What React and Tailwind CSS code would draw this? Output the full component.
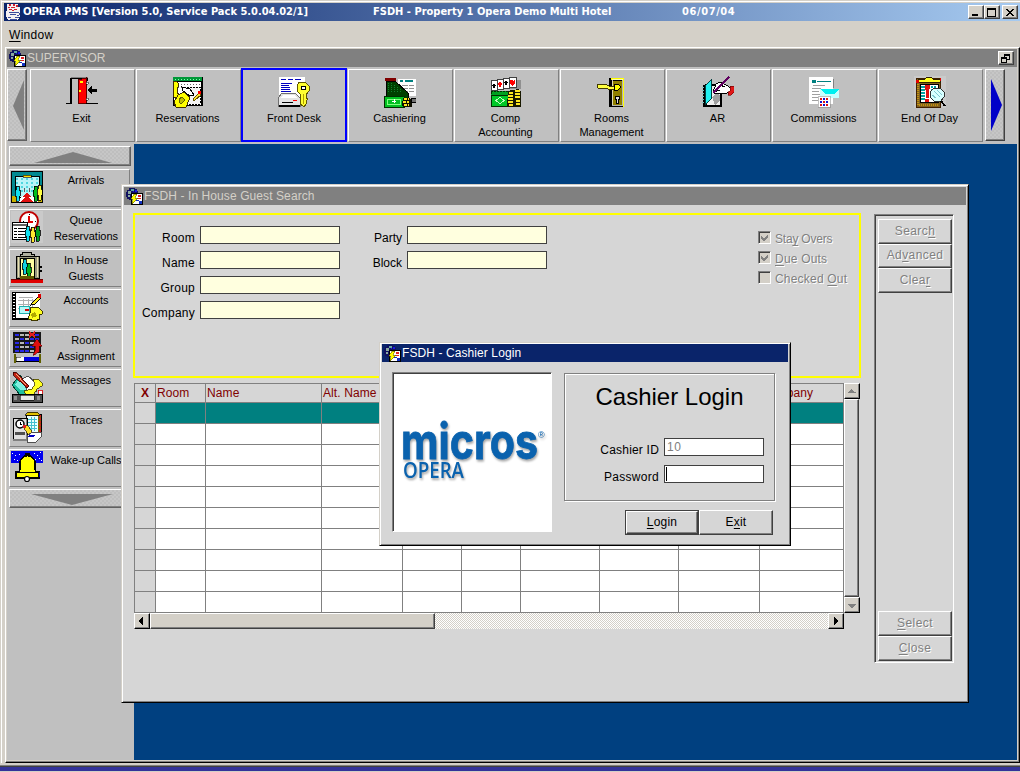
import React from "react";

/* ---------- small pictograms ---------- */

function Pic({ size = 32, children, className = "" }) {
  return (
    <svg width={size} height={size} viewBox={`0 0 ${size} ${size}`} shapeRendering="crispEdges" className={"block shrink-0 " + className}>
      {children}
    </svg>
  );
}

const CupIcon = () => (
  <Pic size={16}>
    <path d="M1 0h11v3h2v9l-2 4H2L0 12V7h1z" fill="#f4f0f0" />
    <path d="M3 0h2v2h-2zM7 0h2v2h-2zM2 3h2v1h-2zM10 1h2v2h-2zM5 3h4v1h-4zM3 5h3v1h-3zM8 5h3v1h-3zM6 6h2v1h-2z" fill="#d02030" />
    <path d="M3 8h8v1h-8zM11 8h2v1h-2zM13 9h1v2h-1zM11 11h2v1h-2zM4 10h6v1h-6zM2 13h3v1h-3zM9 13h4v1h-4zM4 15h7v1h-7z" fill="#3b4a9c" />
  </Pic>
);

const AppIcon = () => (
  <Pic size={17} className="-ml-px">
    <path d="M3 0h6v1h2v2h1v3H5v6H3v-1H1V9H0V4h1V2h2z" fill="#101060" />
    <path d="M2 3h3v3H2zM2 7h2v2H2z" fill="#8aa8a0" />
    <path d="M5 1h3v2H5z" fill="#60a8a0" />
    <path d="M9 2h2v2H9zM7 3h1v1H7z" fill="#1818e0" />
    <rect x="5" y="5" width="12" height="12" fill="#000" />
    <rect x="6" y="6" width="10" height="10" fill="#fff" />
    <path d="M12 7h3v2h-3zM11 10h4v1h-4z" fill="#e02020" />
    <path d="M10 12h3v1h-3zM13 13h3v3h-3z" fill="#1030c0" />
    <path d="M8 6h3l-2 4h3l-6 6 1-5H5z" fill="#ffff00" stroke="#404000" strokeWidth="0.5" />
  </Pic>
);

const ExitIcon = () => (
  <Pic>
    <path d="M4 27V2h18v3h-2V3H6v25H0v-1z" fill="#000" />
    <path d="M5 26V1h17v1H5z" fill="#808080" />
    <path d="M12 4l8-2v25l-8 1z" fill="#f00" stroke="#600000" strokeWidth="1" />
    <path d="M14 5h3v2h-3zM13 14h2v2h-2z" fill="#ffff00" />
    <path d="M20 6h2v2h-2zM20 22h2v2h-2z" fill="#fff" stroke="#000" strokeWidth=".5" />
    <path d="M20 27h12v1H20zM21 14l5-4v3h5v3h-5v3z" fill="#000" />
  </Pic>
);

const ReservationsIcon = () => (
  <Pic>
    <rect x="1" y="1" width="30" height="29" fill="#000" />
    <rect x="1" y="1" width="29" height="4" fill="#009838" />
    <path d="M3 3h25" stroke="#80ffb0" strokeDasharray="1 2" />
    <rect x="2" y="6" width="27" height="23" fill="#fff" />
    <path d="M3 8h26M3 11h26" stroke="#606060" strokeDasharray="1 2" />
    <path d="M12 11h16v17H12z" fill="#f4f4f4" stroke="#000" strokeDasharray="2 1" />
    <path d="M10 11l8 2 4 6-4 1-7-5z" fill="#fff" stroke="#000" />
    <path d="M1 5h3l2 2v4l-1 2v3l2 3v2H2L1 18z" fill="#ffff00" stroke="#403000" />
    <path d="M6 19l6-3 4 4 2 1-1 3-3 7H4l-2-5z" fill="#ffff00" stroke="#403000" />
    <path d="M7 23l3-2 3 3-3 3H8z" fill="#c0c000" stroke="#606000" />
    <path d="M21 23l6-6 2 2-7 6z" fill="#ffe030" stroke="#605000" />
    <path d="M26 15h3v3h-3z" fill="#f00" />
  </Pic>
);

const FrontDeskIcon = () => (
  <Pic>
    <rect x="1" y="1" width="26" height="22" fill="#fff" />
    <path d="M3 3.5h5M10 3.5h5M17 3.5h6M3 7.5h11M3 9.5h8M3 11.5h9M3 13.5h9M3 15.5h10" stroke="#0000c0" strokeWidth="1.2" />
    <path d="M4 17h13l5 5v8H0v-8z" fill="#e4e4e4" stroke="#707070" />
    <path d="M5 19h11l3 3H2z" fill="#fff" />
    <path d="M1 29h21v2H1zM4 26h11v1H4z" fill="#000" />
    <path d="M15 24h4v1h-4z" fill="#f00" />
    <path d="M21 6h6l4 4v5l-3 4v3l2 1-2 2 1 2-3 4-4-3V18l-3-3v-5z" fill="#ffff30" stroke="#605800" />
    <path d="M23 10h4v3h-4z" fill="#fff" stroke="#000" />
    <path d="M25 18v10" stroke="#b0a000" />
  </Pic>
);

const CashieringIcon = () => (
  <Pic>
    <rect x="1" y="2" width="11" height="3" fill="#800000" />
    <rect x="14" y="3" width="18" height="17" fill="#fff" />
    <path d="M16 5h3M21 5h8" stroke="#008080" strokeWidth="2" />
    <path d="M18 9h12M20 12h10M22 15h8" stroke="#909090" />
    <path d="M24 8v10" stroke="#fff" />
    <path d="M2 5h9l13 12v5H2z" fill="#004000" stroke="#000" />
    <path d="M4 7h6M4 9h8M4 11h10M4 13h13M4 15h15" stroke="#108030" strokeDasharray="1 2" />
    <rect x="0" y="20" width="20" height="11" fill="#00c020" stroke="#003000" />
    <rect x="3" y="23" width="13" height="5" fill="none" stroke="#80ff80" />
    <path d="M8 25h4M10 23v4" stroke="#fff" />
    <path d="M19 22h7l2 3v6h-9l-1-3z" fill="#101000" />
    <path d="M20 23h5M19 26h6M20 29h5" stroke="#ffe820" strokeWidth="1.5" strokeDasharray="3 1" />
    <path d="M27 22h5v4h-5z" fill="#707070" stroke="#000" />
  </Pic>
);

const CompIcon = () => (
  <Pic>
    <path d="M3 4h28v9H3z" fill="#909090" />
    <path d="M1 4h6v10H1zM7 3h6v10H7zM13 2h6v10h-6zM19 1h7v10h-7z" fill="#fff" stroke="#404040" />
    <path d="M4 7l2 3H2zM16 4l2 3h-4z" fill="#000" />
    <path d="M3 10h2v2H3zM15 7h2v2h-2z" fill="#000" />
    <path d="M10 5l2 3-2 4-2-4zM20 4h2l1 1 1-1h1v3l-3 3-2-3z" fill="#f00" />
    <path d="M1 15h23v4H1z" fill="#00a020" stroke="#003000" strokeDasharray="2 1" />
    <rect x="1" y="19" width="20" height="11" fill="#00c828" stroke="#003000" />
    <path d="M10 21l4 3.500-4 3.500-4-3.500z" fill="none" stroke="#c0ffc0" />
    <path d="M18 15l4-1 1 0 6-1 2 3v15H17z" fill="#181800" />
    <path d="M19 17h4M18 20h5M18 23h5M18 26h5M19 29h4M25 15h5M25 18h5M25 21h5M26 25h4M26 28h4" stroke="#ffe820" strokeWidth="1.6" />
  </Pic>
);

const RoomsIcon = () => (
  <Pic>
    <rect x="13" y="2" width="15" height="29" fill="#ffff00" />
    <path d="M13 2h2v29h-2zM13 30h14v1H13z" fill="#000" />
    <rect x="15" y="4" width="11" height="25" fill="#908000" stroke="#000" />
    <rect x="16.500" y="3.500" width="10" height="26" fill="none" stroke="#fff" strokeWidth=".7" />
    <path d="M1 8h8l4 2h5v3h-6l-4-1H2z" fill="#ffff40" stroke="#403800" />
    <path d="M18 8h4l2 2v2l-2 2h-4z" fill="#ffff00" stroke="#000" />
    <path d="M19 20h4v3h-1v4h-2v-4h-1z" fill="#e0e0e0" stroke="#000" />
  </Pic>
);

const ArIcon = () => (
  <Pic>
    <path d="M1 9l3-1h12l4 4v19H1z" fill="#000" />
    <path d="M5 10h11l2 3v16H5z" fill="#f0f0f0" />
    <path d="M10 21l5-4 3 3v5l-5 4z" fill="#a0a0a0" />
    <path d="M3 10l6-6v19l-6 6z" fill="#20f0f0" stroke="#004040" />
    <path d="M1 11v18" stroke="#80c0c0" strokeWidth="2" strokeDasharray="1 2" />
    <path d="M11 16l3-8 4-2 6 3 5 3v4l-4 1h-7l-5 1z" fill="#fff" stroke="#000" />
    <path d="M12 16l6-2M18 9l5 2" stroke="#000" />
    <path d="M28 10h4v6l-3 3h-3v-3l2-1z" fill="#e01818" stroke="#600" strokeWidth=".6" />
    <path d="M11 17L27 1" stroke="#600060" strokeWidth="2" />
  </Pic>
);

const CommissionsIcon = () => (
  <Pic>
    <path d="M1 1h24v27H1z" fill="#fff" />
    <path d="M4 4h4v3H4z" fill="#008080" />
    <path d="M9 5.500h14" stroke="#008080" />
    <path d="M5 9.500h12M4 12.500h9M4 15.500h7M4 18.500h8M4 21.500h6M4 24.500h6" stroke="#a0a0a0" />
    <path d="M25 3v9" stroke="#808080" />
    <path d="M12 13h19v9H12z" fill="#c8ffff" />
    <path d="M12 13h19l-5 5h-9z" fill="#00f0f0" />
    <rect x="10" y="20" width="12" height="11" fill="#fff" stroke="#808080" strokeWidth=".5" />
    <path d="M12 22h2v2h-2zM18 22h2v2h-2zM15 25h2v2h-2zM12 28h2v2h-2zM18 28h2v2h-2z" fill="#e01010" />
    <path d="M15 22h2v2h-2zM12 25h2v2h-2zM18 25h2v2h-2zM15 28h2v2h-2z" fill="#1010d0" />
  </Pic>
);

const EndOfDayIcon = () => (
  <Pic>
    <rect width="32" height="32" fill="#cacaca" />
    <path d="M2 2h24v29H2z" fill="#806020" stroke="#402000" />
    <path d="M4 6v23h20" fill="none" stroke="#c09010" strokeDasharray="1 1" strokeWidth="2" />
    <rect x="6" y="8" width="18" height="18" fill="#fff" stroke="#000" />
    <path d="M8 10v14M10 10v14M18 10v12M21 10v4" stroke="#00a0a0" strokeDasharray="2 1" strokeWidth="1.500" />
    <path d="M4 3l6 1 3-3h4l3 3 6-1v3H4z" fill="#ffff20" stroke="#302000" />
    <path d="M2 4h3v3H2zM26 2h1v3h-1z" fill="#e00000" />
    <path d="M11 9h5l-1 9v4h-3v-4zM11 23h4v3h-4z" fill="#e01010" />
    <path d="M20 12h6l4 4v5l-3 4h-7l-4-4v-5z" fill="#d8ffff" stroke="#303030" />
    <path d="M20 15l6 6M18 19l4 3M23 14l5 5" stroke="#80c8d0" />
    <path d="M27 25l4 5" stroke="#000" strokeWidth="2" />
  </Pic>
);

/* ---------- side icons ---------- */

const Person = ({ x, y, fill }) => (
  <path d={`M${x + 1} ${y}h3v4h1v6h-1v5h-3v-5h-1v-6h1z`} fill={fill} stroke="#000" strokeWidth=".8" />
);

const ArrivalsIcon = () => (
  <Pic>
    <rect width="32" height="32" fill="#000" />
    <rect x="1" y="1" width="30" height="30" fill="#008890" />
    <rect x="4" y="5" width="24" height="21" fill="#b8f4f8" stroke="#000" />
    <path d="M5 8h22M5 12h22M5 16h22M5 20h22" stroke="#50d8e0" strokeWidth="2" strokeDasharray="2 3" />
    <path d="M5 31l6-6h10l7 6z" fill="#fff" />
    <rect x="12" y="4" width="8" height="2" fill="#ffe000" stroke="#000" strokeWidth=".6" />
    <path d="M13 17h1v4h-1zM18 17h1v4h-1z" fill="#606060" />
    <path d="M16 21l4 5h-2l4 5H10l4-5h-2z" fill="#e01010" />
    <path d="M1 25h5v6H1zM27 25h4v6h-4z" fill="#c8b000" />
    <Person x={4} y={15} fill="#10e0f0" />
    <Person x={22} y={15} fill="#00c020" />
    <Person x={26} y={14} fill="#ffff40" />
  </Pic>
);

const QueueIcon = () => (
  <Pic>
    <rect width="32" height="32" fill="#cacaca" />
    <circle cx="18" cy="10" r="9" fill="#fff" stroke="#c00000" strokeWidth="2" shapeRendering="auto" />
    <path d="M18 5v6h4" fill="none" stroke="#e00000" strokeWidth="1.500" />
    <path d="M12 10h1M24 10h1M18 3v1" stroke="#000" />
    <rect x="1.500" y="11.500" width="15" height="17" fill="#fff" stroke="#000" />
    <path d="M2 14h14" stroke="#606060" strokeWidth="2" />
    <path d="M3 17.500h3M3 20.500h3M3 23.500h3M3 26.500h3M7 17.500h8M7 20.500h8M7 23.500h8M7 26.500h8" stroke="#000" strokeWidth="1.300" />
    <Person x={14} y={15} fill="#10e0f0" />
    <Person x={24} y={15} fill="#00a020" />
    <Person x={19} y={16} fill="#ffe830" />
  </Pic>
);

const InHouseIcon = () => (
  <Pic>
    <path d="M9 3h2V1h9v2h3v3H9z" fill="#b0b0a0" stroke="#000" />
    <rect x="5" y="5" width="23" height="22" fill="#989880" stroke="#000" />
    <path d="M7 6v20M26 6v20" stroke="#e8e0b0" />
    <rect x="9" y="7" width="14" height="19" fill="#ffffa0" stroke="#000" />
    <Person x={11} y={8} fill="#10d0e0" />
    <Person x={15} y={12} fill="#00b020" />
    <path d="M9 25h14v3H9z" fill="#605800" />
    <rect y="28" width="32" height="4" fill="#e00000" />
    <path d="M0 28h32" stroke="#700000" />
    <path d="M29 15h2v2h-2zM29 19h2v2h-2z" fill="#000" />
  </Pic>
);

const AccountsIcon = () => (
  <Pic>
    <rect x="1" y="1" width="28" height="28" fill="#000" />
    <rect x="5" y="2" width="24" height="25" fill="#fff" />
    <path d="M3 2v27" stroke="#fff" strokeWidth="2" strokeDasharray="1 2" />
    <path d="M8 6h14M7 9h17M7 13h17M7 17h10M12 8v12M17 8v10M21 8v8" stroke="#b0b0b0" />
    <rect x="8" y="15" width="10" height="7" fill="#b8f8f8" stroke="#20b0b0" />
    <path d="M14 18h4v2h-4z" fill="#e00000" />
    <path d="M21 12l7-7 2 2-6 6-4 1z" fill="#ffe820" stroke="#000" />
    <path d="M27 3h3v4h-3z" fill="#e00000" />
    <path d="M19 17l8-1 4 4v3l-3 1 1 4-5 2-7-2 2-6z" fill="#ffff20" stroke="#403800" />
    <path d="M20 23l4-2 2 4-5 2z" fill="#b0a800" />
  </Pic>
);

const RoomAssignIcon = () => (
  <Pic>
    <rect x="2" y="1" width="28" height="21" fill="#181818" />
    <path d="M4 4h24M4 8h24M4 12h24M4 16h24M4 20h24" stroke="#2828e8" strokeWidth="2" strokeDasharray="4 1" />
    <path d="M9 4h4M14 4h4M14 8h4M9 12h4M4 8h4M14 16h4M9 16h4M19 20h4M19 12h4" stroke="#b8b8b8" strokeWidth="2" />
    <path d="M18 1l6 5M24 1l-6 5" stroke="#e02020" strokeWidth="2" />
    <path d="M26 8l5 7h-3v6l-5 3h-1l2-4v-5h-3z" fill="#e01010" stroke="#500000" strokeWidth=".6" />
    <path d="M3 23h2v9H3zM28 23h2v9h-2z" fill="#606000" />
    <path d="M5 26h5v4H5z" fill="#fff" stroke="#000" strokeWidth=".5" />
    <path d="M10 26h18v4H10z" fill="#0000e0" />
    <path d="M10 26h3v4h-3z" fill="#fff" />
    <path d="M5 30h23v1H5z" fill="#000" />
  </Pic>
);

const MessagesIcon = () => (
  <Pic>
    <path d="M1 14l8-10 10 14-6 6H9z" fill="#20c0a0" stroke="#004030" />
    <path d="M4 14l5-7 7 12H9z" fill="#80f0e0" />
    <path d="M11 8l6-3 7 6 2 9-8 3z" fill="#fff" stroke="#505050" />
    <path d="M2 1l3 0 13 14-2 2L2 4z" fill="#c02010" stroke="#300000" strokeWidth=".8" />
    <path d="M5 3l10 11" stroke="#ffd0a0" strokeWidth=".8" />
    <path d="M22 8h5l4 4v3l-5 3-4 6h-7l-2-4 8-2 3-5z" fill="#ffff20" stroke="#403800" strokeWidth=".8" />
    <path d="M27 19h4v4h-4z" fill="#fff" stroke="#e00000" strokeWidth=".8" />
    <path d="M1 23h30v8H1z" fill="#505050" stroke="#000" />
    <path d="M9 24h14v5H9z" fill="#e8e8e8" stroke="#000" strokeWidth=".6" />
    <path d="M3 25h3v4H3zM26 25h3v4h-3z" fill="#909090" />
  </Pic>
);

const TracesIcon = () => (
  <Pic>
    <path d="M15 3h15v20H15z" fill="#806800" stroke="#000" />
    <path d="M29 4v18" stroke="#d02020" strokeWidth="1.500" strokeDasharray="2 1" />
    <rect x="16" y="5" width="11" height="17" fill="#e8ffff" />
    <path d="M17 8h9M17 11h9M17 14h9M17 17h9M20 6v14M23 6v14" stroke="#40c0d0" />
    <path d="M14 4l3-3h9l3 3z" fill="#e0c000" stroke="#000" strokeWidth=".7" />
    <rect x="2" y="7" width="14" height="21" fill="#e0e0e0" stroke="#000" />
    <path d="M2 28h14v1H2zM15 8v20" stroke="#808080" />
    <circle cx="9" cy="13" r="4" fill="#fff" stroke="#000" strokeWidth="1.500" shapeRendering="auto" />
    <path d="M9 11v2h2" fill="none" stroke="#000" />
    <path d="M4 21h10v3H4z" fill="#505050" />
    <path d="M14 14l3 1 5 7-2 2-3-1-4-6z" fill="#ffe020" stroke="#403000" strokeWidth=".8" />
    <path d="M12 14h3v3h-3z" fill="#e02020" />
    <path d="M16 25l5-4h9v5l-5 5h-9z" fill="#fff" stroke="#505050" />
    <path d="M18 24h6l-2 2h-5z" fill="#0000c0" />
  </Pic>
);

const WakeUpIcon = () => (
  <Pic>
    <rect width="32" height="12" fill="#0000f0" />
    <path d="M1 2h1M4 4h1M3 8h1M8 3h1M11 6h1M23 2h1M26 4h1M29 1h1M28 7h1M30 9h1M24 8h1M6 9h1" stroke="#fff" strokeWidth="1" />
    <path d="M15 3h3v2h2l4 5v9l1 2h3v6H5v-6h3l1-2v-9l4-5h2z" fill="#ffff00" stroke="#000" strokeWidth="1.300" />
    <path d="M15 2h3v3h-3zM8 21h17v1H8z" fill="#000" />
    <circle cx="16" cy="28" r="2.500" fill="#fff" stroke="#000" strokeWidth="1.200" shapeRendering="auto" />
    <path d="M28 21h1v5h-1z" fill="#0000a0" />
  </Pic>
);

/* ---------- controls ---------- */

function WinBtn({ children, className = "" }) {
  return (
    <div className={"flex h-[14px] w-[16px] items-center justify-center border border-t-white border-l-white border-r-[#404040] border-b-[#404040] bg-[#d4d0c8] shadow-[inset_-1px_-1px_0_#808080] " + className}>
      {children}
    </div>
  );
}

function ScrollBtn({ d, color = "#000" }) {
  return (
    <div className="flex h-[16px] w-[16px] shrink-0 items-center justify-center border border-t-white border-l-white border-r-black border-b-black bg-[#d4d0c8] shadow-[inset_-1px_-1px_0_#808080]">
      <svg width="8" height="8" viewBox="0 0 8 8" shapeRendering="crispEdges">
        <path d={d} fill={color} />
      </svg>
    </div>
  );
}

function ToolButton({ icon: Icon, lines, active }) {
  const frame = active
    ? "border-2 border-[#0000ff] h-[74px] w-[106px] -mt-px -ml-px mr-px pt-[6px]"
    : "border border-t-white border-l-white border-r-[#808080] border-b-[#808080] h-[73px] w-[105px] mr-px pt-[6px] pr-[2px]";
  return (
    <div className={`flex shrink-0 flex-col items-center bg-[#c0c0c0] ${frame}`}>
      <Icon />
      <div className="mt-[3px] text-center text-[11px] leading-[14px] text-black">
        {lines.map((l) => (
          <div key={l}>{l}</div>
        ))}
      </div>
    </div>
  );
}

function SideItem({ icon: Icon, lines }) {
  return (
    <div className="mb-[2px] flex h-[38px] w-[121px] border border-t-white border-l-white border-r-[#808080] border-b-[#808080] pt-[1px] pl-px">
      <Icon />
      <div className="flex-1 pt-px text-center text-[11px] leading-4 text-black">
        {lines.map((l) => (
          <div key={l} className="whitespace-nowrap">{l}</div>
        ))}
      </div>
    </div>
  );
}

function SearchField({ label, lw }) {
  return (
    <div className="flex h-[25px] items-start">
      <div className={`${lw} pt-[4px] pr-[5px] text-right text-[12px] leading-4 text-black`}>{label}</div>
      <div className="h-[18px] w-[140px] border border-[#404040] bg-[#ffffdf]" />
    </div>
  );
}

const disabledText = "text-[#808080] [text-shadow:1px_1px_0_#fff]";

function Check({ checked, tracking = "tracking-[0.2px]", children }) {
  return (
    <div className="flex h-5 items-start">
      <div className="flex h-[13px] w-[13px] items-center justify-center border border-t-[#808080] border-l-[#808080] border-r-white border-b-white bg-[#d4d0c8] shadow-[inset_1px_1px_0_#404040]">
        {checked && (
          <svg width="9" height="9" viewBox="0 0 9 9" shapeRendering="crispEdges">
            <path d="M1 3v3l2 2h1l4-4V1L4 5H3z" fill="#808080" />
          </svg>
        )}
      </div>
      <div className={`ml-[4px] whitespace-nowrap text-[12px] leading-4 ${tracking} ${disabledText}`}>{children}</div>
    </div>
  );
}

function PanelButton({ h, children }) {
  return (
    <div className={`${h} flex w-[74px] items-center justify-center border border-t-white border-l-white border-r-[#404040] border-b-[#404040] pb-[2px] text-[12px] tracking-[0.4px] shadow-[inset_-1px_-1px_0_#808080] ${disabledText}`}>
      <span>{children}</span>
    </div>
  );
}

const U = ({ children }) => <span className="underline underline-offset-2">{children}</span>;

function MdiTitle({ children, tone }) {
  return (
    <div className={`flex h-[18px] items-center pl-[3px] text-[12px] tracking-[0.09px] ${tone}`}>
      <AppIcon />
      <span className="ml-px whitespace-nowrap">{children}</span>
    </div>
  );
}

/* ---------- data ---------- */

const tools = [
  { icon: ExitIcon, lines: ["Exit"] },
  { icon: ReservationsIcon, lines: ["Reservations"] },
  { icon: FrontDeskIcon, lines: ["Front Desk"], active: true },
  { icon: CashieringIcon, lines: ["Cashiering"] },
  { icon: CompIcon, lines: ["Comp", "Accounting"] },
  { icon: RoomsIcon, lines: ["Rooms", "Management"] },
  { icon: ArIcon, lines: ["AR"] },
  { icon: CommissionsIcon, lines: ["Commissions"] },
  { icon: EndOfDayIcon, lines: ["End Of Day"] },
];

const sideItems = [
  { icon: ArrivalsIcon, lines: ["Arrivals"] },
  { icon: QueueIcon, lines: ["Queue", "Reservations"] },
  { icon: InHouseIcon, lines: ["In House", "Guests"] },
  { icon: AccountsIcon, lines: ["Accounts"] },
  { icon: RoomAssignIcon, lines: ["Room", "Assignment"] },
  { icon: MessagesIcon, lines: ["Messages"] },
  { icon: TracesIcon, lines: ["Traces"] },
  { icon: WakeUpIcon, lines: ["Wake-up Calls"] },
];

const columns = ["X", "Room", "Name", "Alt. Name", "", "", "", "", "", "Company"];
const gridCols = "grid grid-cols-[21px_50px_116px_81px_59px_59px_79px_79px_81px_84px]";

/* ---------- windows ---------- */

function GuestTable() {
  return (
    <div className="w-[710px] border-t border-l border-[#808080]">
      <div className={gridCols}>
        {columns.map((c, i) => (
          <div key={i} className={`h-[19px] border-r border-b border-[#808080] text-[12px] leading-[18px] whitespace-nowrap text-[#800000] ${i === 0 ? "text-center font-bold" : "pl-px tracking-[0.1px]"}`}>
            {c}
          </div>
        ))}
      </div>
      {Array.from({ length: 10 }, (_, r) => (
        <div key={r} className={gridCols}>
          {columns.map((_, i) => (
            <div key={i} className={`h-[21px] border-r border-b border-[#808080] ${i === 0 ? "bg-[#d6d6d6]" : r === 0 ? "bg-[#008080]" : "bg-white"}`} />
          ))}
        </div>
      ))}
    </div>
  );
}

function GuestSearchWindow() {
  return (
    <div className="absolute top-[40px] left-[-13px] h-[519px] w-[848px] border border-t-[#d4d0c8] border-l-[#d4d0c8] border-r-black border-b-black bg-[#d6d6d6] shadow-[inset_1px_1px_0_#fff,inset_-1px_-1px_0_#808080]">
      <div className="flex h-full flex-col pt-[2px] pr-[2px] pl-[2px]">
        <MdiTitle tone="bg-[#808080] text-[#d4d0c8]">FSDH - In House Guest Search</MdiTitle>
        <div className="flex flex-1 pt-[8px] pl-[9px]">
          <div className="w-[728px]">
            <div className="flex h-[165px] w-[728px] border-2 border-[#ffff00] pt-[11px]">
              <div className="tracking-[0.25px]">
                {["Room", "Name", "Group", "Company"].map((l) => (
                  <SearchField key={l} label={l} lw="w-[65px]" />
                ))}
              </div>
              <div>
                {["Party", "Block"].map((l) => (
                  <SearchField key={l} label={l} lw="w-[67px]" />
                ))}
              </div>
              <div className="ml-[211px] pt-[5px]">
                <Check checked tracking="tracking-[-0.2px]">Sta<U>y</U> Overs</Check>
                <Check checked><U>D</U>ue Outs</Check>
                <Check>Checked <U>O</U>ut</Check>
              </div>
            </div>
            <div className="mt-[5px] ml-px flex">
              <GuestTable />
              <div className="flex w-[16px] flex-col">
                <ScrollBtn d="M4 2v1h1v1h1v1h2v1H0V5h1V4h1V3h1V2z" color="#808080" />
                <div className="w-[15px] flex-1 border border-t-white border-l-white border-r-[#404040] border-b-[#404040] shadow-[inset_-1px_-1px_0_#808080]" />
                <ScrollBtn d="M0 3h8v1H7v1H6v1H5v1H3V6H2V5H1V4H0z" color="#808080" />
              </div>
            </div>
            <div className="ml-px flex h-[16px] w-[710px]">
              <ScrollBtn d="M5 0v8H4V7H3V6H2V5H1V3h1V2h1V1h1V0z" />
              <div className="w-[285px] border border-t-white border-l-white border-r-[#404040] border-b-[#404040] bg-[#d4d0c8] shadow-[inset_-1px_-1px_0_#808080]" />
              <div className="flex-1 bg-[repeating-conic-gradient(#fff_0_25%,#d4d0c8_0_50%)] bg-[length:2px_2px]" />
              <ScrollBtn d="M2 0h1v1h1v1h1v1h1v2H5v1H4v1H3v1H2z" />
            </div>
          </div>
          <div className="mt-px ml-[13px] flex h-[449px] w-[80px] flex-col justify-between border border-t-[#808080] border-l-[#808080] border-r-white border-b-white pt-[4px] pb-px pl-[3px] shadow-[inset_1px_1px_0_#404040]">
            <div>
              <PanelButton h="h-[25px]">Searc<U>h</U></PanelButton>
              <PanelButton h="h-[24px]">Ad<U>v</U>anced</PanelButton>
              <PanelButton h="h-[25px]">Clea<U>r</U></PanelButton>
            </div>
            <div>
              <PanelButton h="h-[25px]"><U>S</U>elect</PanelButton>
              <PanelButton h="h-[25px]"><U>C</U>lose</PanelButton>
            </div>
          </div>
        </div>
      </div>
    </div>
  );
}

function LogoBox() {
  return (
    <div className="h-[160px] w-[160px] border border-t-[#808080] border-l-[#808080] border-r-white border-b-white bg-white shadow-[inset_1px_1px_0_#404040]">
      <svg width="158" height="158" viewBox="0 0 158 158" className="overflow-visible [filter:drop-shadow(1px_2px_1px_rgba(0,0,0,0.35))]">
        <text x="8" y="86" fontFamily="Inter, 'Liberation Sans', Arial, sans-serif" fontWeight="700" fontSize="49" fill="#0a62ae" stroke="#0a62ae" strokeWidth="0.8" textLength="137" lengthAdjust="spacingAndGlyphs">micros</text>
        <text x="145" y="65" fontFamily="'Liberation Sans', Arial, sans-serif" fontSize="9" fill="#0a62ae">®</text>
        <text x="10" y="105" fontFamily="'Open Sans', 'Noto Sans', sans-serif" fontWeight="600" fontSize="21" fill="#0a62ae" textLength="61" lengthAdjust="spacingAndGlyphs">OPERA</text>
      </svg>
    </div>
  );
}

function LoginDialog() {
  return (
    <div className="absolute top-[198px] left-[245px] h-[204px] w-[412px] border border-t-[#d4d0c8] border-l-[#d4d0c8] border-r-black border-b-black bg-[#d6d6d6] shadow-[inset_1px_1px_0_#fff,inset_-1px_-1px_0_#808080]">
      <div className="px-[2px] pt-px">
        <MdiTitle tone="bg-[#0a246a] text-white">FSDH - Cashier Login</MdiTitle>
        <div className="flex pt-[10px] pl-[10px]">
          <LogoBox />
          <div className="ml-[12px] w-[211px]">
            <div className="mt-px h-[128px] border border-[#808080] shadow-[inset_1px_1px_0_#fff,1px_1px_0_#fff]">
              <div className="pt-[8px] text-center text-[24px] leading-[30px] text-black">Cashier Login</div>
              <div className="mt-[26px] flex">
                <div className="w-[99px] pt-[4px] pr-[5px] text-right text-[12px] leading-4 tracking-[0.2px] whitespace-nowrap text-black">Cashier ID</div>
                <div className="h-[18px] w-[100px] border border-[#404040] bg-white pl-[2px] text-[12px] leading-[16px] tracking-[0.5px] text-[#808080]">10</div>
              </div>
              <div className="mt-[7px] flex">
                <div className="w-[99px] pt-[4px] pr-[5px] text-right text-[12px] leading-4 tracking-[0.3px] whitespace-nowrap text-black">Password</div>
                <div className="h-[18px] w-[100px] border border-[#404040] bg-white p-px">
                  <div className="h-full w-px bg-black" />
                </div>
              </div>
            </div>
            <div className="mt-[9px] ml-[61px] flex text-[12px] tracking-[0.2px] text-black">
              <div className="h-[25px] w-[74px] border border-[#404040]">
                <div className="flex h-full items-center justify-center border border-t-white border-l-white border-r-[#404040] border-b-[#404040] pb-px shadow-[inset_-1px_-1px_0_#808080]">
                  <span><U>L</U>ogin</span>
                </div>
              </div>
              <div className="flex h-[25px] w-[74px] items-center justify-center border border-t-white border-l-white border-r-[#404040] border-b-[#404040] pb-px shadow-[inset_-1px_-1px_0_#808080]">
                <span>E<U>x</U>it</span>
              </div>
            </div>
          </div>
        </div>
      </div>
    </div>
  );
}

const dither = "bg-[repeating-conic-gradient(#bebebe_0_25%,#c6c6c6_0_50%)] bg-[length:4px_4px]";

export default function App() {
  return (
    <div className="flex h-[772px] w-[1020px] flex-col overflow-hidden bg-[#d4d0c8] font-['Liberation_Sans',Arial,sans-serif]">
      <div className="flex h-[763px] border-l border-[#d4d0c8]">
        <div className="flex flex-1 flex-col border-t border-l border-t-[#d4d0c8] border-l-white">
          {/* title bar */}
          <div className="border-t border-white pt-px pl-[2px]">
            <div className="flex h-[18px] items-center bg-[linear-gradient(to_right,#0a246a,#a6caf0)] pl-[2px] font-['DejaVu_Sans_Condensed','DejaVu_Sans',sans-serif] text-[11px] font-bold text-white [font-stretch:condensed]">
              <CupIcon />
              <span className="ml-px w-[350px] whitespace-nowrap">OPERA PMS [Version 5.0, Service Pack 5.0.04.02/1]</span>
              <span className="w-[309px] whitespace-nowrap">FSDH - Property 1 Opera Demo Multi Hotel</span>
              <span className="tracking-[0.6px] whitespace-nowrap">06/07/04</span>
              <div className="mr-[2px] ml-auto flex">
                <WinBtn>
                  <div className="mt-[6px] mr-[2px] h-[2px] w-[6px] bg-black" />
                </WinBtn>
                <WinBtn>
                  <div className="mr-px h-[9px] w-[9px] border border-t-2 border-black" />
                </WinBtn>
                <WinBtn className="ml-[2px]">
                  <svg width="8" height="7" viewBox="0 0 8 7" shapeRendering="crispEdges" className="mr-px">
                    <path d="M0 0h2v1h1v1h2V1h1V0h2v1H7v1H6v1H5v1h1v1h1v1h1v1H6V6H5V5H3v1H2v1H0V6h1V5h1V4h1V3H2V2H1V1H0z" fill="#000" />
                  </svg>
                </WinBtn>
              </div>
            </div>
          </div>
          {/* menu bar */}
          <div className="h-[26px] pt-[6px] pl-[7px] text-[12px] leading-4 tracking-[0.3px] text-black">
            <U>W</U>indow
          </div>
          {/* MDI frame */}
          <div className="ml-[3px] flex flex-1 flex-col border border-t-white border-l-white border-r-black border-b-black pt-px pl-px shadow-[inset_-1px_-1px_0_#808080]">
            <div className="mr-[2px] flex h-[18px] items-center bg-[#808080] pr-[3px] pl-[3px] text-[12px] text-[#d4d0c8]">
              <AppIcon />
              <span className="ml-px">SUPERVISOR</span>
              <WinBtn className="ml-auto">
                <svg width="9" height="9" viewBox="0 0 9 9" shapeRendering="crispEdges" className="mr-px">
                  <path d="M3 0h6v6H6V5h2V2H4v1H3zM0 3h6v6H0zM1 5v3h4V5z" fill="#000" fillRule="evenodd" />
                </svg>
              </WinBtn>
            </div>
            <div className="mr-[2px] flex h-[77px] bg-[#c0c0c0] pt-[2px]">
              <div className={`mr-[3px] flex h-[72px] w-[20px] shrink-0 items-center justify-end border border-t-white border-l-white border-r-[#606060] border-b-[#606060] pr-[2px] shadow-[inset_-1px_-1px_0_#808080] ${dither}`}>
                <svg width="11" height="50" viewBox="0 0 11 50">
                  <path d="M11 0v50L0 26z" fill="#808080" />
                </svg>
              </div>
              {tools.map((t) => (
                <ToolButton key={t.lines.join()} {...t} />
              ))}
              <div className={`ml-px flex h-[72px] w-[20px] shrink-0 items-center border border-t-white border-l-white border-r-[#404040] border-b-[#404040] pl-[5px] shadow-[inset_-1px_-1px_0_#808080] ${dither}`}>
                <svg width="11" height="52" viewBox="0 0 11 52">
                  <path d="M0 0v52L11 26z" fill="#0000c8" />
                </svg>
              </div>
            </div>
            <div className="mr-[2px] mb-[2px] flex flex-1">
              <div className="w-[127px] bg-[#c0c0c0] pt-[2px] pl-[2px]">
                <div className={`mb-[3px] flex h-[20px] w-[122px] items-end justify-center border border-t-white border-l-white border-r-[#606060] border-b-[#606060] pb-[2px] shadow-[inset_-1px_-1px_0_#808080] ${dither}`}>
                  <svg width="78" height="11" viewBox="0 0 78 11" className="ml-[6px]">
                    <path d="M0 11h78L39 0z" fill="#808080" />
                  </svg>
                </div>
                {sideItems.map((s) => (
                  <SideItem key={s.lines.join()} {...s} />
                ))}
                <div className={`flex h-[19px] w-[122px] justify-center border border-t-white border-l-white border-r-[#606060] border-b-[#606060] pt-[4px] shadow-[inset_-1px_-1px_0_#808080] ${dither}`}>
                  <svg width="82" height="11" viewBox="0 0 82 11" className="ml-[4px]">
                    <path d="M0 0h82L41 11z" fill="#808080" />
                  </svg>
                </div>
              </div>
              <div className="relative flex-1 bg-[#004080]">
                <GuestSearchWindow />
                <LoginDialog />
              </div>
            </div>
          </div>
        </div>
      </div>
      <div className="mt-[2px] h-px bg-[#808080]" />
      <div className="h-[5px] border-t border-[#404040] bg-[#333399]" />
    </div>
  );
}
